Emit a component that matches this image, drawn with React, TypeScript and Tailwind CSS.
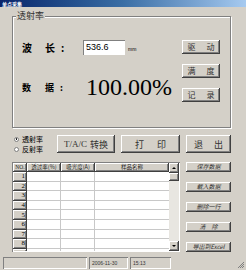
import React from "react";

// Windows classic 3D borders
const raised =
  "bg-[#d4d0c8] shadow-[inset_-1px_-1px_#404040,inset_1px_1px_#ffffff,inset_-2px_-2px_#808080]";
const sunken = "shadow-[inset_1px_1px_#808080,inset_-1px_-1px_#ffffff]";
const cjk = "font-['Noto_Sans_CJK_SC',sans-serif]";

function Btn({
  children,
  className = "",
}: {
  children: React.ReactNode;
  className?: string;
}) {
  return (
    <div
      className={`${raised} ${cjk} flex items-center justify-center whitespace-nowrap text-[#333] leading-none ${className}`}
    >
      {children}
    </div>
  );
}

function Radio({ checked, label }: { checked?: boolean; label: string }) {
  return (
    <div className="flex items-center gap-[3px] h-[10px]">
      <div className="w-[5px] h-[5px] rounded-full bg-white border border-[#808080] flex items-center justify-center">
        {checked && <div className="w-[1.5px] h-[1.5px] rounded-full bg-black" />}
      </div>
      <span className={`${cjk} text-[7px] leading-none text-black`}>{label}</span>
    </div>
  );
}

const rows = [1, 2, 3, 4, 5, 6, 7, 8, 9];

export default function App() {
  return (
    <div className="w-[246px] h-[270px] bg-[#d4d0c8] flex flex-col overflow-hidden">
      {/* title bar */}
      <div className="h-[7px] bg-gradient-to-r from-[#0a246a] via-[#3a6ea5] to-[#a6caf0] flex items-center pl-[2px]">
        <span className={`${cjk} text-[5px] leading-none font-bold text-white`}>单点采集</span>
      </div>

      {/* group box */}
      <div className="mt-[9px] ml-[12px] w-[219px] h-[112px] border border-[#808080] shadow-[inset_1px_1px_#ffffff,1px_1px_#ffffff] relative flex">
        <span
          className={`${cjk} absolute -top-[6px] left-[3px] px-[1px] bg-[#d4d0c8] text-[9px] leading-none text-[#333]`}
        >
          透射率
        </span>

        <div className="flex-1 flex flex-col pl-[9px] pt-[23px]">
          <div className="flex items-center h-[15px]">
            <div className={`${cjk} flex items-center w-[61px] text-[10px] font-bold leading-none`}>
              <span className="w-[23px]">波</span>
              <span className="w-[16px]">长</span>
              <span>:</span>
            </div>
            <div
              className={`${sunken} w-[42px] h-[15px] bg-white flex items-center pl-[3px] font-['Liberation_Sans',sans-serif] text-[9px] text-black`}
            >
              536.6
            </div>
            <span className="ml-[3px] mt-[3px] font-['Liberation_Sans',sans-serif] text-[5px] leading-none">
              mm
            </span>
          </div>

          <div className="flex items-center mt-[20px] h-[24px]">
            <div className={`${cjk} flex items-center w-[64px] text-[9px] font-bold leading-none`}>
              <span className="w-[23px]">数</span>
              <span className="w-[15px]">据</span>
              <span>:</span>
            </div>
            <span className="font-['Liberation_Serif',serif] text-[24px] leading-none text-black">
              100.00%
            </span>
          </div>
        </div>

        <div className="w-[38px] mr-[10px] pt-[23px] flex flex-col gap-[10px] text-[8px]">
          <Btn className="h-[14px] gap-[11px]">
            <span>驱</span>
            <span>动</span>
          </Btn>
          <Btn className="h-[14px] gap-[11px]">
            <span>满</span>
            <span>度</span>
          </Btn>
          <Btn className="h-[14px] gap-[11px]">
            <span>记</span>
            <span>录</span>
          </Btn>
        </div>
      </div>

      {/* radio + action buttons */}
      <div className="mt-[7px] ml-[12px] w-[219px] h-[18px] flex items-center">
        <div className="w-[45px] pl-[2px] flex flex-col">
          <Radio checked label="透射率" />
          <Radio label="反射率" />
        </div>
        <Btn className="w-[58px] h-[18px] text-[9px] gap-[3px]">
          <span className="font-['Liberation_Serif',serif]">T/A/C</span>
          <span>转换</span>
        </Btn>
        <Btn className="ml-[6px] w-[59px] h-[18px] text-[9px] gap-[13px]">
          <span>打</span>
          <span>印</span>
        </Btn>
        <Btn className="ml-[6px] w-[45px] h-[18px] text-[9px] gap-[11px]">
          <span>退</span>
          <span>出</span>
        </Btn>
      </div>

      {/* table + side buttons */}
      <div className="mt-[9px] ml-[12px] w-[219px] h-[90px] flex">
        <div className={`w-[168px] h-[90px] bg-white p-[1px] flex ${sunken} overflow-hidden`}>
          <div className="flex-1 flex flex-col overflow-hidden">
            <div className={`${cjk} flex shrink-0 h-[9px] text-[5.5px] leading-none whitespace-nowrap text-[#222]`}>
              <div className={`${raised} w-[14px] flex items-center justify-center font-['Liberation_Serif',serif]`}>
                NO.
              </div>
              <div className={`${raised} w-[34px] flex items-center justify-center`}>透过率(%)</div>
              <div className={`${raised} w-[34px] flex items-center justify-center`}>吸光度(A)</div>
              <div className={`${raised} flex-1 flex items-center justify-center`}>样品名称</div>
            </div>
            {rows.map((n) => (
              <div key={n} className="flex h-[9.6px] shrink-0">
                <div
                  className={`${raised} w-[14px] flex items-center justify-end pr-[2px] font-['Liberation_Serif',serif] text-[7px] leading-none`}
                >
                  {n}
                </div>
                <div className="w-[34px] border-r border-b border-[#c8c8c8]" />
                <div className="w-[34px] border-r border-b border-[#c8c8c8]" />
                <div className="flex-1 border-b border-[#c8c8c8]" />
              </div>
            ))}
          </div>
          {/* scrollbar */}
          <div className="w-[10px] flex flex-col bg-[#e8e6e1]">
            <div className={`${raised} h-[10px] flex items-center justify-center`}>
              <div className="w-0 h-0 border-l-[2px] border-r-[2px] border-b-[2px] border-l-transparent border-r-transparent border-b-black" />
            </div>
            <div className={`${raised} h-[8px]`} />
            <div className="flex-1" />
            <div className={`${raised} h-[10px] flex items-center justify-center`}>
              <div className="w-0 h-0 border-l-[2px] border-r-[2px] border-t-[2px] border-l-transparent border-r-transparent border-t-black" />
            </div>
          </div>
        </div>

        <div className="ml-[6px] w-[45px] flex flex-col gap-[10px] text-[6px] italic">
          <Btn className="h-[10px]">保存数据</Btn>
          <Btn className="h-[10px]">载入数据</Btn>
          <Btn className="h-[10px]">删除一行</Btn>
          <Btn className="h-[10px] gap-[6px]">
            <span>清</span>
            <span>除</span>
          </Btn>
          <Btn className="h-[10px]">导出到Excel</Btn>
        </div>
      </div>

      {/* status bar */}
      <div className="mt-[5px] h-[13px] flex items-stretch pl-[3px] pb-[1px] text-[5px] leading-none font-['Liberation_Sans',sans-serif] text-[#333]">
        <div className={`${sunken} w-[84px]`} />
        <div className={`${sunken} ml-[2px] w-[39px] flex items-center pl-[3px]`}>2006-11-30</div>
        <div className={`${sunken} ml-[2px] w-[41px] flex items-center pl-[3px]`}>15:13</div>
        <div className="flex-1 flex items-end justify-end pr-[1px]">
          <svg width="8" height="8" viewBox="0 0 8 8">
            <path d="M7 1 L1 7 M7 3 L3 7 M7 5 L5 7" stroke="#808080" strokeWidth="1" />
          </svg>
        </div>
      </div>
    </div>
  );
}
